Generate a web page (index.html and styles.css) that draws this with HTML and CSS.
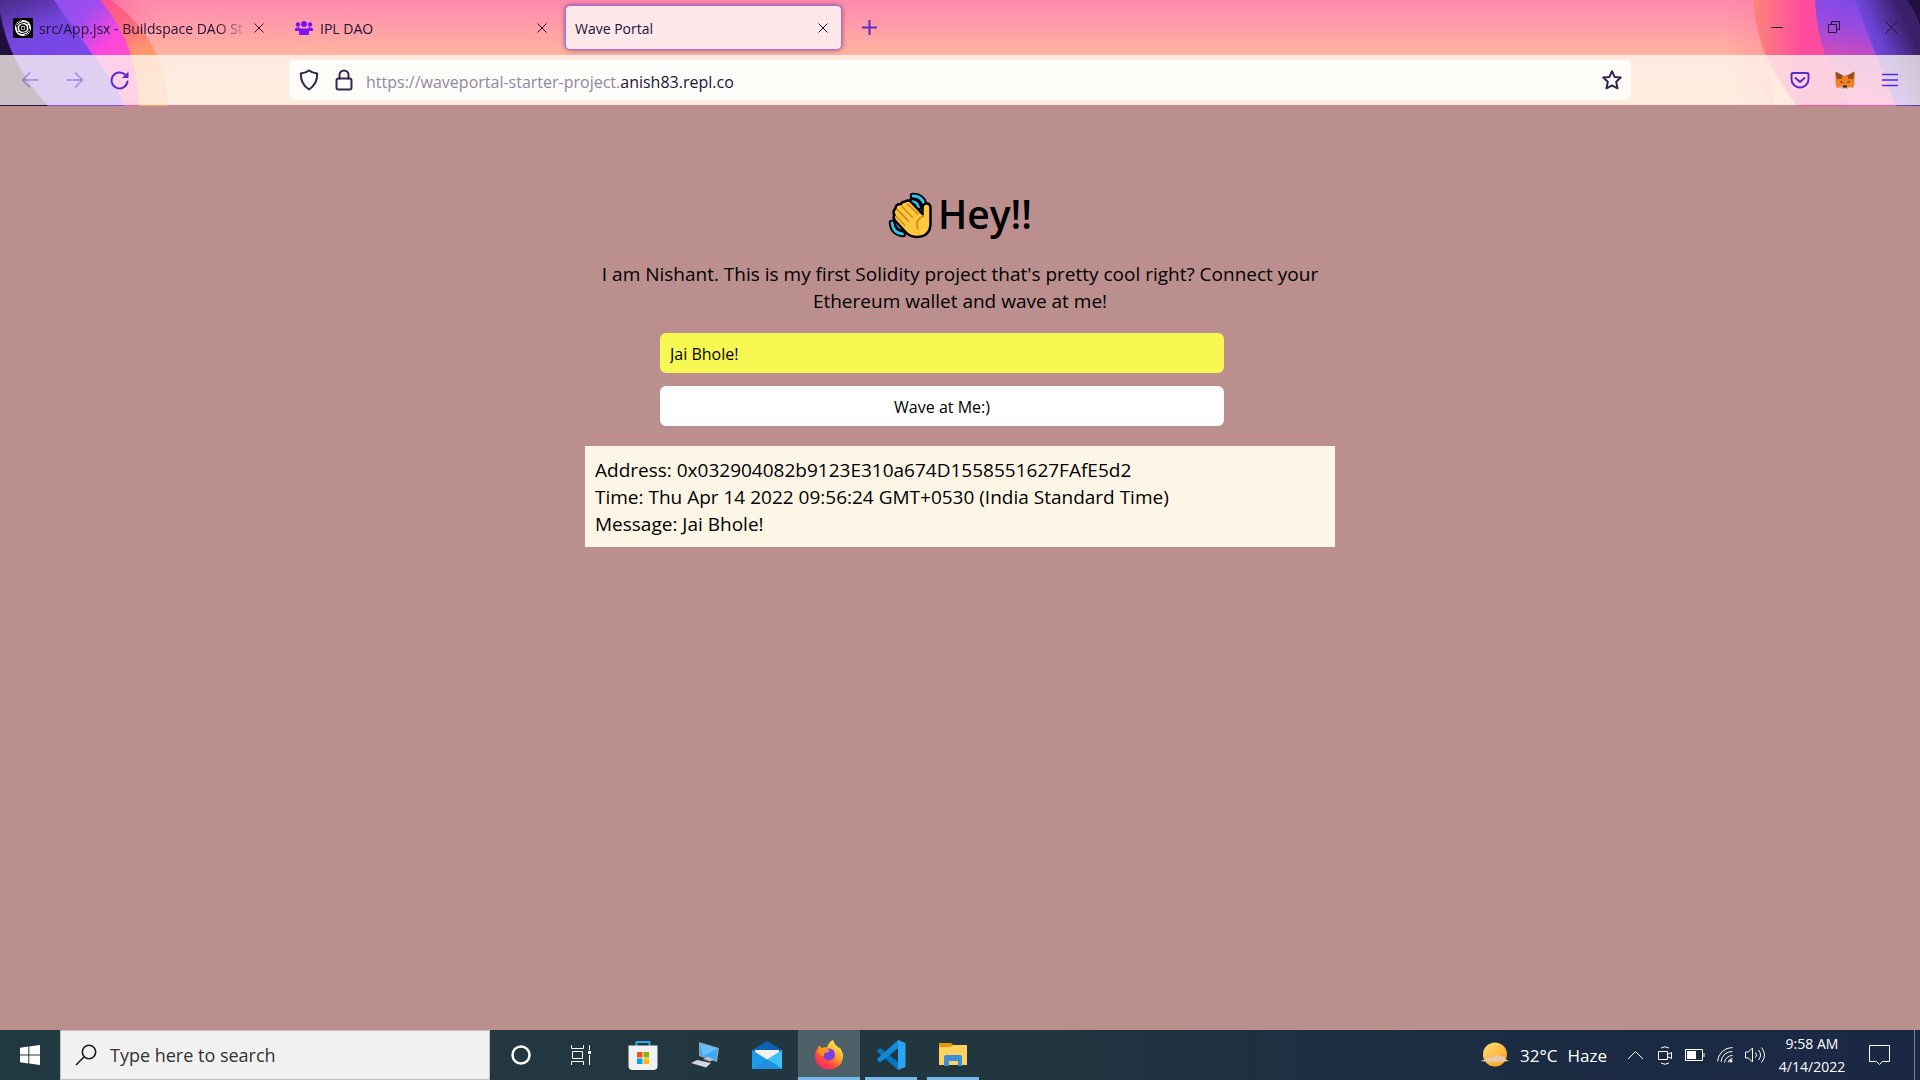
FILE: index.html
```html
<!DOCTYPE html>
<html lang="en">
<head>
<meta charset="utf-8">
<meta name="viewport" content="width=device-width, initial-scale=1">
<title>Wave Portal</title>
<link rel="stylesheet" href="styles.css">
</head>
<body>
<header class="browser">
  <svg class="art art-left" width="220" height="106" viewBox="0 0 220 106" aria-hidden="true">
    <defs>
      <linearGradient id="la" x1="0.2" y1="0" x2="0.6" y2="1"><stop offset="0" stop-color="#ff4f90"/><stop offset="0.3" stop-color="#ff6a80"/><stop offset="0.6" stop-color="#ff9a6c"/><stop offset="1" stop-color="#ffa870"/></linearGradient>
      <linearGradient id="lb" x1="0" y1="0" x2="1" y2="1"><stop offset="0" stop-color="#8a52f2"/><stop offset="0.3" stop-color="#a04cf0"/><stop offset="0.55" stop-color="#ff46dc"/><stop offset="1" stop-color="#ff5aa8"/></linearGradient>
      <linearGradient id="lc" x1="0" y1="0" x2="0.5" y2="1"><stop offset="0" stop-color="#4b2a86"/><stop offset="0.35" stop-color="#7446e0"/><stop offset="1" stop-color="#8448f2"/></linearGradient>
      <linearGradient id="lt" x1="0" y1="0" x2="1" y2="0"><stop offset="0" stop-color="#ff4f8c"/><stop offset="1" stop-color="#ff8cae" stop-opacity="0"/></linearGradient>
    </defs>
    <path d="M80 0H170L140 40z" fill="url(#lt)"/>
    <path d="M90 0H111Q166 40 168 106H90z" fill="url(#la)"/>
    <path d="M40 0H100Q137 42 139 106H40z" fill="url(#lb)"/>
    <path d="M0 0H54L93 55Q118 86 124 106H0z" fill="url(#lc)"/>
    <path d="M0 12Q8 62 48 106H0z" fill="#22103c"/>
  </svg>
  <svg class="art art-right" width="220" height="106" viewBox="0 0 220 106" aria-hidden="true">
    <defs>
      <linearGradient id="ra" x1="0" y1="0" x2="1" y2="0"><stop offset="0" stop-color="#ff8578"/><stop offset="0.3" stop-color="#ff4b9e"/><stop offset="1" stop-color="#ff4b9e"/></linearGradient>
      <linearGradient id="rb" x1="0.6" y1="0" x2="0.4" y2="1"><stop offset="0" stop-color="#7c48e8"/><stop offset="0.3" stop-color="#9a4be0"/><stop offset="0.6" stop-color="#d04bb8"/><stop offset="1" stop-color="#ff5ab0"/></linearGradient>
      <linearGradient id="rc" x1="0" y1="0.6" x2="0.7" y2="0.1"><stop offset="0" stop-color="#8a58ff"/><stop offset="0.5" stop-color="#6a42d0"/><stop offset="1" stop-color="#3a2068"/></linearGradient>
      <linearGradient id="rt" x1="0" y1="0" x2="1" y2="0"><stop offset="0" stop-color="#ff7a98" stop-opacity="0"/><stop offset="1" stop-color="#ff7a90"/></linearGradient>
    </defs>
    <path d="M20 0H60L74 106H40z" fill="url(#rt)" opacity=".35"/>
    <path d="M53 0Q56 55 97 106H220V0z" fill="url(#ra)"/>
    <path d="M115 0Q117 55 150 106H220V0z" fill="url(#rb)"/>
    <path d="M155 0L176 55L196 106H220V0z" fill="url(#rc)"/>
    <path d="M207 0Q215 10 220 25V0z" fill="#22103c"/>
  </svg>

  <div class="tabstrip">
    <div class="tabs">
      <div class="tab">
        <svg width="20" height="20" viewBox="0 0 20 20" aria-hidden="true"><rect width="20" height="20" rx="1"/><circle cx="10" cy="10" r="8" fill="#fff"/><g fill="none" stroke="#000" stroke-width="1"><circle cx="10" cy="10" r="3" stroke-width="1.600"/><path d="M5 13q-2.500-5 2-7.500T15 6M15 7q2.500 5-2 7.500T5 14M3.500 9q0-5 5-6M16.500 11q0 5-5 6"/></g><circle cx="10" cy="10" r="1.500"/></svg>
        <span class="tab-title fade">src/App.jsx - Buildspace DAO St</span>
        <button class="tab-close" aria-label="Close src/App.jsx"><svg width="10" height="10" viewBox="0 0 10 10"><path d="M.5.5l9 9M9.500.5l-9 9"/></svg></button>
      </div>
      <div class="tab">
        <svg width="20" height="20" viewBox="0 0 20 20" fill="#7a10f5" aria-hidden="true"><circle cx="4" cy="6.500" r="2.200"/><circle cx="16" cy="6.500" r="2.200"/><circle cx="10" cy="6" r="3"/><path d="M1 13v-1.500Q1 9.500 3 9.500h2.500q.5.500 1 .8L4.500 13zM19 13v-1.500q0-2-2-2h-2.500q-.5.500-1 .8l2 2.700zM5 16v-2.500Q5 10.500 8 10.500h4q3 0 3 3V16q0 1-1 1H6q-1 0-1-1z"/></svg>
        <span class="tab-title">IPL DAO</span>
        <button class="tab-close" aria-label="Close IPL DAO"><svg width="10" height="10" viewBox="0 0 10 10"><path d="M.5.5l9 9M9.500.5l-9 9"/></svg></button>
      </div>
      <div class="tab active">
        <span class="tab-title">Wave Portal</span>
        <button class="tab-close" aria-label="Close Wave Portal"><svg width="10" height="10" viewBox="0 0 10 10"><path d="M.5.5l9 9M9.500.5l-9 9"/></svg></button>
      </div>
    </div>
    <button class="new-tab" aria-label="New tab"><svg width="15" height="15" viewBox="0 0 15 15"><path d="M7.500 0v15M0 7.500h15"/></svg></button>
    <div class="window-buttons">
      <button aria-label="Minimize"><svg width="13" height="13" viewBox="0 0 13 13"><path d="M0 6.500h12"/></svg></button>
      <button aria-label="Restore"><svg width="13" height="13" viewBox="0 0 13 13"><path d="M.5 3.500h8v8h-8zM3.500 3.500v-3h8v8h-3"/></svg></button>
      <button aria-label="Close"><svg width="13" height="13" viewBox="0 0 13 13"><path d="M.5.5l12 12M12.500.5l-12 12"/></svg></button>
    </div>
  </div>

  <div class="toolbar">
    <div class="nav">
      <button class="dim" aria-label="Back"><svg width="18" height="16" viewBox="0 0 18 16"><path d="M17 8H2M8.500 1l-7 7 7 7"/></svg></button>
      <button class="dim" aria-label="Forward"><svg width="18" height="16" viewBox="0 0 18 16"><path d="M1 8h15M9.500 1l7 7-7 7"/></svg></button>
      <button aria-label="Reload"><svg width="20" height="20" viewBox="0 0 20 20"><path d="M17.500 11.500A8 8 0 1 1 15.500 5l1 1" stroke-width="2"/><path d="M18.500 1.500v6.500H12z" fill="#5a2cc8" stroke="none"/></svg></button>
    </div>
    <div class="urlbar">
      <svg width="20" height="22" viewBox="0 0 20 22" aria-hidden="true"><path d="M10 1.500Q13 4 18.200 4.500 18.500 15 10 20.500 1.500 15 1.800 4.500 7 4 10 1.500z"/></svg>
      <svg width="18" height="22" viewBox="0 0 18 22" aria-hidden="true"><rect x="1.500" y="9.500" width="15" height="11" rx="2"/><path d="M4.500 9.500V6a4.500 4.500 0 0 1 9 0v3.500"/></svg>
      <a class="url" href="#">https://waveportal-starter-project.<span>anish83.repl.co</span></a>
      <button aria-label="Bookmark this page"><svg width="20" height="20" viewBox="0 0 20 20"><path d="M10 1.200l2.600 5.700 6.200.7-4.600 4.200 1.300 6.500L10 15.400l-5.500 2.900 1.300-6.500L1.200 7.600l6.200-.7z"/></svg></button>
    </div>
    <div class="tools">
      <button aria-label="Save to Pocket"><svg width="20" height="18" viewBox="0 0 20 18"><path d="M3 2h14q1.500 0 1.500 1.500V8a8.500 8.500 0 0 1-17 0V3.500Q1.500 2 3 2zM5.500 7l4.500 4 4.500-4" stroke-width="2"/></svg></button>
      <button aria-label="MetaMask"><svg class="plain" width="20" height="19" viewBox="0 0 20 19"><path d="M2 4.500h16L19.500 12l-1.300 5-4-1-2 2H7.800l-2-2-4 1L.5 12z" fill="#f08020"/><path d="M.5.5L8 4.500 6.500 8H1.500zM19.500.5L12 4.500 13.500 8h5z" fill="#9a4c1c"/><path d="M.5.5L2 9 1 12l-.5-6zM19.500.5L18 9l1 3 .5-6z" fill="#d96a1c"/><path d="M5 9l3.500 2.500L5 12zM15 9l-3.500 2.500L15 12z" fill="#c45a12"/><path d="M6.500 10.500l1.500 1-1.500.5zM13.500 10.500l-1.500 1 1.500.5z" fill="#222"/><path d="M7 15.500h6L12 18H8z" fill="#d8c4b0"/><path d="M8.500 14.500h3l.5 2h-4z" fill="#111"/></svg></button>
      <button aria-label="Open menu"><svg width="16" height="14" viewBox="0 0 16 14"><path d="M0 1.500h15.500M0 7h15.500M0 12.500h15.500" stroke-width="1.500"/></svg></button>
    </div>
  </div>
</header>

<main class="page">
  <div class="column">
    <h1>
      <svg width="45" height="47" viewBox="0 0 45 47" role="img" aria-label="Waving hand">
        <g fill="none" stroke="#000" stroke-width="6.500" stroke-linecap="round"><path d="M25 4q10 0 12 11M24 9q5 1 7 6M4 31q1 10 11 11M9 31q1 5 6 6"/></g>
        <g fill="none" stroke="#2cc3f2" stroke-width="2.800" stroke-linecap="round"><path d="M25 4q10 0 11.500 10.500M24.500 9.500q5 1 6 5.500M4 31q1 10 10.500 11M9.500 31.500q1 4 5.500 5"/></g>
        <path d="M13 12q1-2.500 4-2.500 3-2 5.500 0l12 12.500V15q.5-3.500 4-3.500 4 0 4 4.500V32q-.5 12.500-13.500 13-7 0-11.500-5L7 28.500Q4.500 25.500 6.500 23q-2.500-3.500 1-6.500 0-4.500 5.500-4.500z" fill="#ffc83d" stroke="#000" stroke-width="2.500"/>
        <path d="M14 14.500l10 10.500M19.500 12L30 22M9.500 18L20.500 29M8.500 24.500l8 8.500M35 24q-9 5-5 13" fill="none" stroke="#d98d1e" stroke-width="1.800" stroke-linecap="round"/>
      </svg><span>Hey!!</span>
    </h1>
    <p class="bio">I am Nishant. This is my first Solidity project that's pretty cool right? Connect your Ethereum wallet and wave at me!</p>
    <form class="wave-form">
      <input type="text" value="Jai Bhole!" aria-label="Message">
      <button type="button">Wave at Me:)</button>
    </form>
    <article class="wave">
      <div>Address: 0x032904082b9123E310a674D1558551627FAfE5d2</div>
      <div>Time: Thu Apr 14 2022 09:56:24 GMT+0530 (India Standard Time)</div>
      <div>Message: Jai Bhole!</div>
    </article>
  </div>
</main>

<footer class="taskbar">
  <button class="start" aria-label="Start"><svg width="20" height="20" viewBox="0 0 20 20" fill="#fff"><path d="M0 2.800L8.300 1.600V9.500H0zM9.300 1.500L20 0v9.500H9.300zM0 10.500h8.300v7.900L0 17.200zM9.300 10.500H20V20L9.300 18.500z"/></svg></button>
  <label class="search">
    <svg width="22" height="22" viewBox="0 0 22 22" fill="none" stroke="#1a1a1a" stroke-width="1.600" aria-hidden="true"><circle cx="14" cy="8" r="6.700"/><path d="M9.200 12.700L1 21"/></svg>
    <input type="text" placeholder="Type here to search" aria-label="Search">
  </label>
  <div class="apps">
    <button class="system" aria-label="Cortana"><svg width="20" height="20" viewBox="0 0 20 20" fill="none" stroke="#fff" stroke-width="2.500"><circle cx="10" cy="10" r="8.500"/></svg></button>
    <button class="system" aria-label="Task View"><svg width="21" height="20" viewBox="0 0 21 20" fill="none" stroke="#fff"><path d="M.5 0v3.500h12V0M.5 20v-3.500h12V20M1.500 6.500h10v7h-10zM18.500 0v5M18.500 10v10"/><path d="M17 6h3v3h-3z" fill="#fff" stroke="none"/></svg></button>
    <button aria-label="Microsoft Store"><svg width="30" height="30" viewBox="0 0 30 30"><path d="M8.500 7V2h13v5" fill="none" stroke="#2aa8ea" stroke-width="2"/><path d="M.5 5.500h29V26q0 4-4 4h-21q-4 0-4-4z" fill="#f1f1f1"/><path d="M9 12h5.500v5.500H9z" fill="#f25022"/><path d="M15.500 12H21v5.500h-5.500z" fill="#7fba00"/><path d="M9 18.500h5.500V24H9z" fill="#00a4ef"/><path d="M15.500 18.500H21V24h-5.500z" fill="#ffb900"/></svg></button>
    <button aria-label="This PC"><svg width="28" height="26" viewBox="0 0 28 26"><path d="M8 0l20 6-2 14L8 14z" fill="#8fa5b5"/><path d="M9 1.500l17.500 5-1.500 11.500L9 13z" fill="#3fa9f5"/><path d="M9 1.500l17.500 5L12 14z" fill="#6cc0fa"/><path d="M12 17l5-2 6 2.500-4 2z" fill="#b9c2c8"/><path d="M6 18l14 3-5 4.500L0 21z" fill="#d3d9dd"/></svg></button>
    <button aria-label="Mail"><svg width="30" height="28" viewBox="0 0 30 28"><path d="M0 9L15 0l15 9v6H0z" fill="#0f5fb4"/><path d="M3 9h24v8L15 22 3 15z" fill="#f2f2f2"/><path d="M0 9l30 19H0z" fill="#1c9be8"/><path d="M30 9v19L15 18.500z" fill="#3cc2f2"/><path d="M0 28l15-9.500L30 28z" fill="#1f8fe0"/></svg></button>
    <button class="running current" aria-label="Firefox"><svg width="30" height="30" viewBox="0 0 30 30"><defs><linearGradient id="ff" x1=".85" y1=".1" x2=".25" y2="1"><stop offset="0" stop-color="#fff050"/><stop offset=".4" stop-color="#ffa32a"/><stop offset=".7" stop-color="#ff4a3c"/><stop offset="1" stop-color="#e8287a"/></linearGradient></defs><path d="M19 0q1 4 4.500 6.500l2 2q0-1-.5-2 5 6 4 11.500-2 11-14 11.500Q2 29 1 17q0-6 3-9l1-3q1 2 3 3 3-1 5-.5 2-6 6-7.500z" fill="url(#ff)"/><circle cx="15" cy="14.500" r="6" fill="#7a3ee0"/><path d="M4 11q5-5 11-1 1 2-3 2.500-3 .5-2 4-5-2-6-5.500z" fill="#ff9420"/></svg></button>
    <button class="running" aria-label="Visual Studio Code"><svg width="30" height="30" viewBox="0 0 30 30"><path d="M1 10.500l3-2.500L23 22.500 22 30 1 11.500z" fill="#0a74bd"/><path d="M1 20l3 2.500L23 7.500 22 0 1 19z" fill="#0d8ad8"/><path d="M22 0l7.500 3v24L22 30z" fill="#2ba4f2"/></svg></button>
    <button class="running" aria-label="File Explorer"><svg width="28" height="24" viewBox="0 0 28 24"><path d="M0 0h12l2 2v6H0z" fill="#e19b0c"/><path d="M0 4h12l2-2h14v20H0z" fill="#ffd160"/><path d="M5 23V14q0-2 2-2h14q2 0 2 2v9h-4v-5h-9v5z" fill="#3a8fd8"/></svg></button>
  </div>
  <div class="tray">
    <button class="weather"><svg width="30" height="26" viewBox="0 0 30 26" aria-hidden="true"><defs><linearGradient id="sun" x1="0" y1="0" x2="1" y2="1"><stop offset="0" stop-color="#ffe07a"/><stop offset="1" stop-color="#f79a10"/></linearGradient></defs><circle cx="15" cy="12.500" r="12" fill="url(#sun)"/><path d="M0 19q5-1 7-3 3-2 6 0 4-5 8-2 4 1 4 3l4 2q-14 2-29 0z" fill="#e3c9b0"/></svg><span>32°C</span><span>Haze</span></button>
    <button aria-label="Show hidden icons"><svg width="17" height="10" viewBox="0 0 17 10"><path d="M1 9l7.500-7.500L16 9"/></svg></button>
    <button aria-label="Meet Now"><svg width="15" height="19" viewBox="0 0 15 19"><path d="M.5 5.500h9v8h-9zM9.500 8.500l4-2v6l-4-2M3 2q4-2.500 8 0M3 17q4 2.500 8 0"/></svg></button>
    <button aria-label="Battery"><svg width="20" height="12" viewBox="0 0 20 12"><path d="M.5.5h17v11H.5zM19 4v4"/><path d="M2 2h9v8H2z" fill="#fff" stroke="none"/></svg></button>
    <button aria-label="Network"><svg width="17" height="16" viewBox="0 0 17 16"><path d="M.5 14.500A15 15 0 0 1 15.500.5M4 15A11 11 0 0 1 15.500 4.500M7.500 15.500a8 8 0 0 1 8-7"/><path d="M11 15.500a5 5 0 0 1 4.500-4" /><circle cx="14" cy="14" r="1.500" fill="#fff" stroke="none"/></svg></button>
    <button aria-label="Volume"><svg width="21" height="18" viewBox="0 0 21 18"><path d="M.5 6h3L7.500 2v14l-4-4h-3zM10.500 6.500q2 2.500 0 5M13.500 4q4 5 0 10M16.500 1.500q6 7.500 0 15"/></svg></button>
    <button class="clock"><span>9:58 AM</span><span>4/14/2022</span></button>
    <button class="notice" aria-label="Notifications"><svg width="21" height="20" viewBox="0 0 21 20"><path d="M.5.500h20v16h-7l-3 3-3-3h-7z"/></svg></button>
  </div>
</footer>
</body>
</html>
```
FILE: styles.css
```css
* { box-sizing: border-box; }

body {
  margin: 0;
  min-height: 100vh;
  display: flex;
  flex-direction: column;
  background: #bc8f8f;
  color: #000;
  font-family: "Open Sans", "Noto Sans", sans-serif;
}

button, input {
  border: 0;
  margin: 0;
  padding: 0;
  background: none;
  color: inherit;
  font: inherit;
}

button {
  display: flex;
  align-items: center;
  justify-content: center;
}

svg { flex: none; display: block; }

/* Browser window */
.browser {
  position: relative;
  background: linear-gradient(#ff8ab0, #ffb3a0 55px, #ffc8a0);
  border-bottom: 1px solid rgba(160, 110, 110, 0.4);
  color: #20123a;
}

.art { position: absolute; top: 0; }
.art-left { left: 0; }
.art-right { right: 0; }

.tabstrip {
  position: relative;
  display: flex;
  height: 55px;
  font-size: 14px;
}

.tabs { display: flex; gap: 6px; padding: 5px 0; }

.tab {
  display: flex;
  align-items: center;
  gap: 6px;
  width: 276px;
  padding: 0 5px 0 13px;
}

.tab + .tab { width: 277px; padding-left: 12px; }

.tab.active {
  padding: 0 6px 0 9px;
  border: 1px solid #a06af5;
  border-radius: 5px;
  background: #ffe8ea;
  box-shadow: 0 0 5px rgba(100, 50, 80, 0.7);
}

.tab-title { flex: 1; overflow: hidden; padding-top: 1px; white-space: nowrap; }
.fade {
  -webkit-mask-image: linear-gradient(to left, transparent, #000 30px);
  mask-image: linear-gradient(to left, transparent, #000 30px);
}

.tab-close { width: 24px; height: 24px; margin-left: -7px; }
.tab-close svg, .window-buttons svg { fill: none; stroke: #20123a; }
.new-tab { width: 54px; }
.new-tab svg { stroke: #5a2cc8; stroke-width: 2; }
.window-buttons { display: flex; margin-left: auto; }
.window-buttons button { width: 57px; }

.toolbar {
  position: relative;
  display: flex;
  align-items: center;
  height: 50px;
  background: rgba(255, 250, 243, 0.76);
}

.toolbar svg:not(.plain) { fill: none; stroke: #5a2cc8; stroke-width: 1.5; stroke-linejoin: round; stroke-linecap: round; }
.nav { display: flex; width: 289px; padding-left: 7px; }
.nav button { width: 45px; height: 40px; }
.nav .dim { opacity: 0.45; }

.urlbar {
  flex: 1;
  display: flex;
  align-items: center;
  height: 40px;
  padding: 0 9px 0 10px;
  border-radius: 5px;
  background: #fffdfa;
}

.toolbar .urlbar svg { stroke: #33264d; stroke-width: 2; }
.urlbar > svg + svg { margin-left: 16px; }
.url { flex: 1; margin-left: 13px; padding-top: 3px; color: #8f88a0; font-size: 16px; text-decoration: none; }
.url span { color: #20123a; }
.tools { display: flex; justify-content: flex-end; width: 289px; padding-right: 8px; }
.tools button { width: 45px; height: 40px; }

/* Page */
.page { flex: 1; display: flex; justify-content: center; padding-top: 77px; }
.column { width: 100%; max-width: 750px; }

h1 {
  display: flex;
  align-items: center;
  justify-content: center;
  gap: 5px;
  margin: 0;
  height: 64px;
  font-size: 39px;
  line-height: 60px;
  font-weight: 600;
}

h1 span { padding-bottom: 3px; }

.bio { margin: 14px 0 18px; font-size: 19px; line-height: 27px; text-align: center; }

.wave-form {
  display: flex;
  flex-direction: column;
  gap: 13px;
  width: 80%;
  margin: 0 auto 20px;
}

.wave-form input, .wave-form button {
  width: 94%;
  height: 40px;
  padding: 1px 10px 0;
  border-radius: 6px;
  font-size: 16px;
}

.wave-form input { background: #f8f852; }
.wave-form button { background: #fff; }
.wave { padding: 11px 10px 9px; background: #fdf5e6; font-size: 19px; line-height: 27px; }

/* Windows taskbar */
.taskbar {
  display: flex;
  height: 50px;
  background: linear-gradient(90deg, #223840, #22363f 50%, #1b2b42 80%, #1b2845);
  color: #fff;
}

.start { width: 60px; }

.search {
  display: flex;
  align-items: center;
  gap: 13px;
  width: 430px;
  padding-left: 14px;
  border: 1px solid #c0c0c0;
  background: #f1f1f1;
}

.search input { flex: 1; min-width: 0; color: #222; font-size: 18px; }
.search input::placeholder { color: #333; opacity: 1; }

.apps { display: flex; }
.apps button { width: 62px; position: relative; }
.apps .system { width: 61px; }
.apps .current { background: #4d5f67; }

.running::after {
  content: "";
  position: absolute;
  right: 5px;
  bottom: 0;
  left: 5px;
  height: 3px;
  background: #76b9ed;
}

.current::after { right: 0; left: 0; }

.tray { display: flex; margin-left: auto; padding-right: 5px; }
.tray button { width: 30px; }
.tray button:not(.weather) svg { fill: none; stroke: #fff; }
.tray .weather { width: auto; gap: 10px; padding-right: 13px; font-size: 17px; }
.tray .clock { flex-direction: column; width: 84px; font-size: 14px; line-height: 23px; }
.tray .notice { width: 61px; padding-right: 10px; border-right: 1px solid #77808f; }
```
